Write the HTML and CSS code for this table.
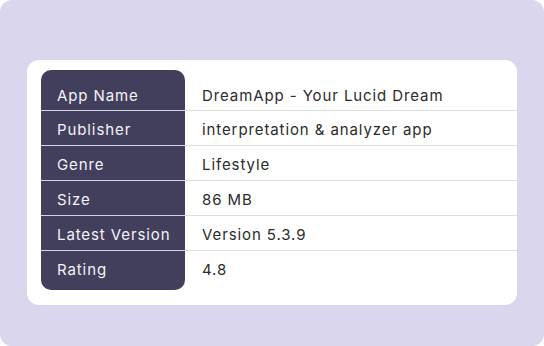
FILE: index.html
```html
<!DOCTYPE html>
<html lang="en">
<head>
    <meta charset="UTF-8">
    <title>App Info</title>
    <link rel="stylesheet" href="styles.css">
</head>
<body>

<div class="frame">
    <div class="card">
        <div class="info-table">
            <div class="row">
                <div class="label">App Name</div>
                <div class="value">DreamApp - Your Lucid Dream</div>
            </div>
            <div class="row">
                <div class="label">Publisher</div>
                <div class="value">interpretation &amp; analyzer app</div>
            </div>
            <div class="row">
                <div class="label">Genre</div>
                <div class="value">Lifestyle</div>
            </div>
            <div class="row">
                <div class="label">Size</div>
                <div class="value">86 MB</div>
            </div>
            <div class="row">
                <div class="label">Latest Version</div>
                <div class="value">Version 5.3.9</div>
            </div>
            <div class="row">
                <div class="label">Rating</div>
                <div class="value">4.8</div>
            </div>
        </div>
    </div>
</div>

</body>
</html>
```

FILE: styles.css
```css
body {
    margin: 0;
    background: #fff;
    font-family: "Inter", "Open Sans", sans-serif;
}

.frame {
    height: 346px;
    box-sizing: border-box;
    padding: 60px 27px 41px 27px;
    background: #dad6ed;
    border-radius: 12px;
}

.card {
    height: 100%;
    box-sizing: border-box;
    padding: 10px 0 13px 14px;
    background: #fff;
    border-radius: 12px;
}

.info-table {
    display: flex;
    flex-direction: column;
}

.row {
    display: flex;
    height: 35px;
}

.row:first-child {
    height: 40px;
}

.row:last-child {
    height: 40px;
}

.label,
.value {
    font-size: 15px;
    line-height: 1;
    letter-spacing: 0.9px;
}

.label {
    width: 144px;
    box-sizing: border-box;
    padding: 17px 0 0 16px;
    background: #423f5d;
    color: #f4f3f8;
}

.value {
    flex: 1;
    padding: 17px 0 0 17px;
    color: #2b2b2b;
}

.row + .row .label {
    border-top: 1px solid #d6d4e0;
}

.row + .row .value {
    border-top: 1px solid #dedede;
}

.row + .row .label,
.row + .row .value {
    padding-top: 11px;
}

.row:first-child .label {
    border-radius: 10px 10px 0 0;
    padding-top: 18px;
}

.row:first-child .value {
    padding-top: 18px;
}

.row:last-child .label {
    border-radius: 0 0 10px 10px;
}
```
